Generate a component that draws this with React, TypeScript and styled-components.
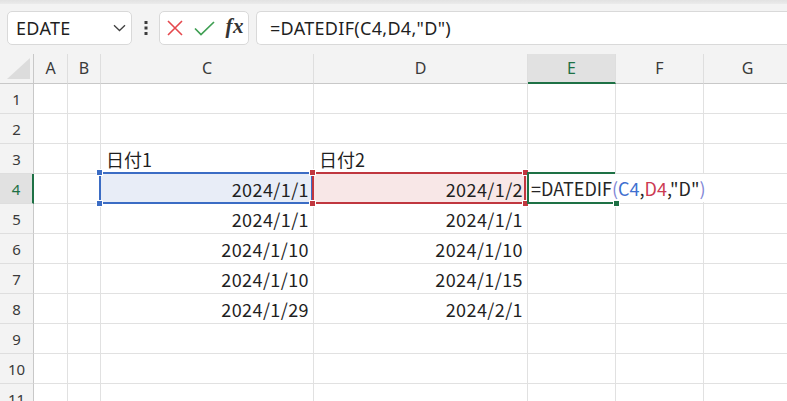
import styled, { createGlobalStyle } from 'styled-components';

const GlobalStyle = createGlobalStyle`
  html, body {
    margin: 0;
    padding: 0;
    background: #ffffff;
    overflow: hidden;
  }
`;

const UI_FONT = `"Noto Sans", "Open Sans", sans-serif`;
const CELL_FONT = `"Noto Sans CJK JP", "Noto Sans", sans-serif`;
const GREEN = '#1e7145';
const BLUE = '#3b6cc4';
const RED = '#c0373f';

const COLS = ['A', 'B', 'C', 'D', 'E', 'F', 'G'];
const ROWS = [1, 2, 3, 4, 5, 6, 7, 8, 9, 10, 11];

type Val = { text: string; align?: 'left' | 'right' };
const DATA: Record<string, Val> = {
  C3: { text: '日付1', align: 'left' },
  D3: { text: '日付2', align: 'left' },
  C4: { text: '2024/1/1' },
  D4: { text: '2024/1/2' },
  C5: { text: '2024/1/1' },
  D5: { text: '2024/1/1' },
  C6: { text: '2024/1/10' },
  D6: { text: '2024/1/10' },
  C7: { text: '2024/1/10' },
  D7: { text: '2024/1/15' },
  C8: { text: '2024/1/29' },
  D8: { text: '2024/2/1' },
};

const App = () => {
  return (
    <Page>
      <GlobalStyle />
      <TopStrip />
      <Toolbar>
        <NameBox>
          <span>EDATE</span>
          <svg width="13" height="8" viewBox="0 0 13 8">
            <path d="M1 1.2 L6.5 6.5 L12 1.2" fill="none" stroke="#404040" strokeWidth="1.3" />
          </svg>
        </NameBox>
        <Dots>
          <svg width="4" height="14" viewBox="0 0 4 14">
            <rect x="0.5" y="0" width="3" height="3" fill="#3c3c3c" />
            <rect x="0.5" y="5.5" width="3" height="3" fill="#3c3c3c" />
            <rect x="0.5" y="11" width="3" height="3" fill="#3c3c3c" />
          </svg>
        </Dots>
        <FxGroup>
          <svg width="16" height="16" viewBox="0 0 16 16">
            <path d="M1 1 L15 15 M15 1 L1 15" stroke="#e5484d" strokeWidth="1.6" fill="none" />
          </svg>
          <svg width="21" height="15" viewBox="0 0 21 15">
            <path d="M1 7.5 L7 13.5 L20 1" stroke="#3f9f53" strokeWidth="1.7" fill="none" />
          </svg>
          <FxLabel>fx</FxLabel>
        </FxGroup>
        <FormulaBox>=DATEDIF(C4,D4,"D")</FormulaBox>
      </Toolbar>
      <Sheet>
        <Corner>
          <svg width="23" height="21" viewBox="0 0 23 21">
            <path d="M23 0 L23 21 L0 21 Z" fill="#dcdcdc" />
          </svg>
        </Corner>
        {COLS.map((c) => (
          <ColHead key={c} $active={c === 'E'}>
            {c}
          </ColHead>
        ))}
        {ROWS.map((r) => (
          <Row key={r} r={r} />
        ))}
      </Sheet>
    </Page>
  );
};

const Row = ({ r }: { r: number }) => (
  <>
    <RowHead $active={r === 4}>{r}</RowHead>
    {COLS.map((c) => {
      const id = `${c}${r}`;
      const v = DATA[id];
      return (
        <Cell key={id} $align={v?.align ?? 'right'} $fill={id === 'C4' ? '#e8edf7' : id === 'D4' ? '#f8e7e7' : undefined}>
          {v?.text}
          {id === 'C4' && (
            <RangeBox $color={BLUE} $right={0} $z={2}>
              <Handle $color={BLUE} $x="left" $y="top" />
              <Handle $color={BLUE} $x="left" $y="bottom" />
            </RangeBox>
          )}
          {id === 'D4' && (
            <RangeBox $color={RED} $right={1} $z={3}>
              <Handle $color={RED} $x="left" $y="top" />
              <Handle $color={RED} $x="left" $y="bottom" />
              <Handle $color={RED} $x="right" $y="top" />
              <Handle $color={RED} $x="right" $y="bottom" />
            </RangeBox>
          )}
          {id === 'E4' && (
            <>
              <Editor>
                =DATEDIF<Paren>(</Paren>
                <Ref $color="#3e70d0">C4</Ref>,<Ref $color="#cc3a52">D4</Ref>,"D"<Paren>)</Paren>
              </Editor>
              <ActiveBox>
                <Handle $color={GREEN} $x="right" $y="bottom" />
              </ActiveBox>
            </>
          )}
        </Cell>
      );
    })}
  </>
);

const Page = styled.div`
  width: 787px;
  height: 401px;
  overflow: hidden;
  display: flex;
  flex-direction: column;
  background: #ffffff;
`;

const TopStrip = styled.div`
  height: 4px;
  flex: none;
  background: linear-gradient(#e2e2e2, #ebebeb);
`;

const Toolbar = styled.div`
  flex: none;
  height: 50px;
  box-sizing: border-box;
  padding: 7px 0 9px 7px;
  display: flex;
  align-items: stretch;
  background: #f3f3f3;
`;

const Box = styled.div`
  box-sizing: border-box;
  background: #ffffff;
  border: 1px solid #d9d9d9;
  border-radius: 5px;
  display: flex;
  align-items: center;
`;

const NameBox = styled(Box)`
  width: 125px;
  padding: 0 5px 0 8px;
  justify-content: space-between;
  font-family: ${UI_FONT};
  font-size: 18px;
  letter-spacing: 0.3px;
  color: #1f1f1f;
`;

const Dots = styled.div`
  width: 27px;
  display: flex;
  align-items: center;
  justify-content: center;
`;

const FxGroup = styled(Box)`
  width: 90px;
  padding: 0 4px 0 7px;
  justify-content: space-between;
`;

const FxLabel = styled.span`
  font-family: "Liberation Serif", "DejaVu Serif", serif;
  font-style: italic;
  font-weight: bold;
  font-size: 21px;
  color: #333333;
  letter-spacing: 0.5px;
  margin-top: -3px;
`;

const FormulaBox = styled(Box)`
  flex: 1;
  margin-left: 7px;
  border-right: none;
  border-radius: 5px 0 0 5px;
  padding-left: 13px;
  font-family: ${UI_FONT};
  font-size: 18px;
  letter-spacing: 0.3px;
  color: #1f1f1f;
`;

const Sheet = styled.div`
  display: grid;
  grid-template-columns: 34px 34px 33px 213px 214px 88px 88px 88px;
  grid-template-rows: 30px;
  grid-auto-rows: 30px;
  flex: none;
`;

const HeadBase = styled.div`
  box-sizing: border-box;
  background: #f3f3f3;
  display: flex;
  align-items: center;
  justify-content: center;
  font-family: ${UI_FONT};
  color: #3a3a3a;
`;

const Corner = styled(HeadBase)`
  border-right: 1px solid #c8c8c8;
  border-bottom: 1px solid #c8c8c8;
  align-items: flex-end;
  justify-content: flex-start;
  padding: 0 0 4px 7px;
`;

const ColHead = styled(HeadBase)<{ $active?: boolean }>`
  font-size: 16px;
  padding-bottom: 1px;
  border-right: 1px solid #dedede;
  border-bottom: ${(p) => (p.$active ? `2px solid ${GREEN}` : '1px solid #c8c8c8')};
  background: ${(p) => (p.$active ? '#e1e1e1' : '#f3f3f3')};
  color: ${(p) => (p.$active ? GREEN : '#3a3a3a')};
`;

const RowHead = styled(HeadBase)<{ $active?: boolean }>`
  font-size: 15px;
  border-bottom: 1px solid #dedede;
  border-right: ${(p) => (p.$active ? `2px solid ${GREEN}` : '1px solid #c8c8c8')};
  background: ${(p) => (p.$active ? '#e1e1e1' : '#f3f3f3')};
  color: ${(p) => (p.$active ? GREEN : '#3a3a3a')};
`;

const Cell = styled.div<{ $align: 'left' | 'right'; $fill?: string }>`
  position: relative;
  box-sizing: border-box;
  border-right: 1px solid #e1e1e1;
  border-bottom: 1px solid #e1e1e1;
  background: ${(p) => p.$fill ?? '#ffffff'};
  display: flex;
  align-items: center;
  justify-content: ${(p) => (p.$align === 'left' ? 'flex-start' : 'flex-end')};
  padding: 0 4px 0 5px;
  font-family: ${CELL_FONT};
  font-size: 18px;
  letter-spacing: ${(p) => (p.$align === 'left' ? '0' : '0.4px')};
  color: #1f1f1f;
  white-space: nowrap;
`;

const RangeBox = styled.div<{ $color: string; $right: number; $z: number }>`
  position: absolute;
  top: -2px;
  left: -2px;
  right: ${(p) => p.$right}px;
  bottom: -1px;
  border: 2px solid ${(p) => p.$color};
  z-index: ${(p) => p.$z};
  pointer-events: none;
`;

const ActiveBox = styled.div`
  position: absolute;
  top: -2px;
  left: -1px;
  right: 0;
  bottom: -1px;
  border: 2px solid ${GREEN};
  border-right: none;
  z-index: 4;
`;

const Handle = styled.div<{ $color: string; $x: 'left' | 'right'; $y: 'top' | 'bottom' }>`
  position: absolute;
  width: 5px;
  height: 5px;
  background: ${(p) => p.$color};
  box-shadow: 0 0 0 1px #ffffff;
  ${(p) => p.$x}: -4px;
  ${(p) => p.$y}: -4px;
`;

const Editor = styled.div`
  position: absolute;
  top: 0;
  left: 0;
  bottom: 1px;
  padding: 0 4px 0 3px;
  display: flex;
  align-items: center;
  background: #ffffff;
  z-index: 3;
  letter-spacing: 0;
  color: #262626;
`;

const Paren = styled.span`
  color: #7f86d6;
`;

const Ref = styled.span<{ $color: string }>`
  color: ${(p) => p.$color};
`;

export default App;
